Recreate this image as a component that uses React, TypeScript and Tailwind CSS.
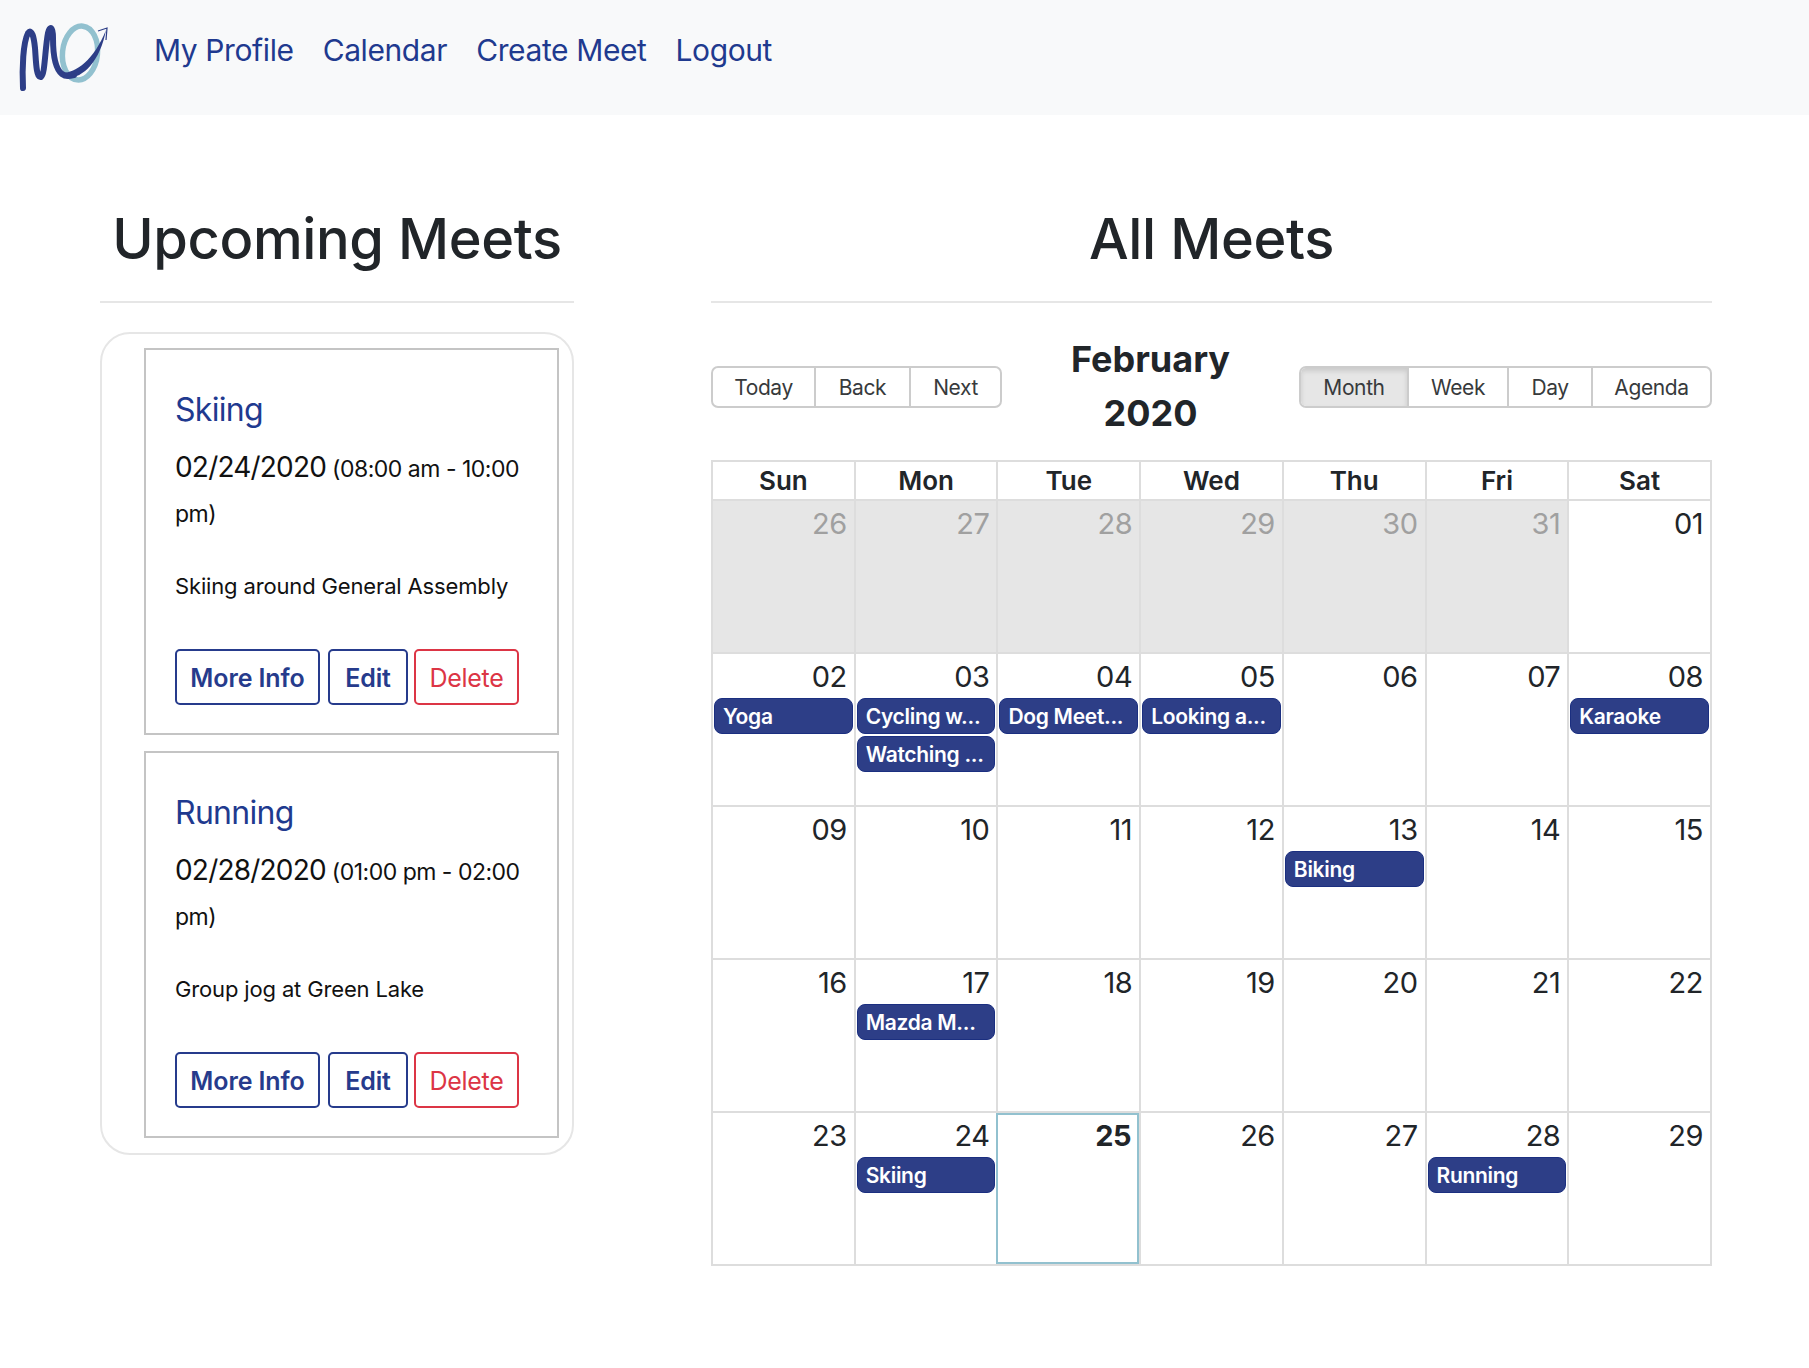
const NAV = ["My Profile", "Calendar", "Create Meet", "Logout"];

const MEETS = [
  {
    title: "Skiing",
    date: "02/24/2020",
    time: "(08:00 am - 10:00 pm)",
    body: "Skiing around General Assembly",
  },
  {
    title: "Running",
    date: "02/28/2020",
    time: "(01:00 pm - 02:00 pm)",
    body: "Group jog at Green Lake",
  },
];

const HEAD = ["Sun", "Mon", "Tue", "Wed", "Thu", "Fri", "Sat"];

type Day = { n: string; off?: boolean; today?: boolean; events?: string[] };

const WEEKS: Day[][] = [
  [
    { n: "26", off: true },
    { n: "27", off: true },
    { n: "28", off: true },
    { n: "29", off: true },
    { n: "30", off: true },
    { n: "31", off: true },
    { n: "01" },
  ],
  [
    { n: "02", events: ["Yoga"] },
    { n: "03", events: ["Cycling w...", "Watching ..."] },
    { n: "04", events: ["Dog Meet..."] },
    { n: "05", events: ["Looking a..."] },
    { n: "06" },
    { n: "07" },
    { n: "08", events: ["Karaoke"] },
  ],
  [
    { n: "09" },
    { n: "10" },
    { n: "11" },
    { n: "12" },
    { n: "13", events: ["Biking"] },
    { n: "14" },
    { n: "15" },
  ],
  [
    { n: "16" },
    { n: "17", events: ["Mazda M..."] },
    { n: "18" },
    { n: "19" },
    { n: "20" },
    { n: "21" },
    { n: "22" },
  ],
  [
    { n: "23" },
    { n: "24", events: ["Skiing"] },
    { n: "25", today: true },
    { n: "26" },
    { n: "27" },
    { n: "28", events: ["Running"] },
    { n: "29" },
  ],
];

function Logo() {
  return (
    <svg width="100" height="80" viewBox="0 0 100 80" className="shrink-0">
      <ellipse cx="64" cy="35" rx="17.5" ry="27" fill="none" stroke="#92c1cf" strokeWidth="5.5" transform="rotate(6 64 35)" />
      <path
        d="M7 70 C6 50 7 25 12 15 C16 10 18 20 19 30 C20 42 20 60 25 59 C29 57 29 30 32 15 C34 7 37 9 37 20 C37 32 38 50 46 56 C50 59 54 58 58 57"
        fill="none"
        stroke="#2d3e87"
        strokeWidth="6"
        strokeLinecap="round"
        strokeLinejoin="round"
      />
      <path d="M46 55 C60 55 78 42 90 12 C84 44 66 62 48 60 Z" fill="#2d3e87" />
      <path d="M82 13 L91 10 L90 22" fill="none" stroke="#2d3e87" strokeWidth="1.2" />
    </svg>
  );
}

function MeetCard({ title, date, time, body }: (typeof MEETS)[number]) {
  return (
    <div className="h-[387px] border-2 border-[#c4c4c4] px-[29px] pt-[41px]">
      <h3 className="text-[32px] leading-[38px] tracking-[-0.7px] text-[#1f3a8f]">{title}</h3>
      <p className="mt-[16px] text-[23px] leading-[45px] tracking-[-0.5px] text-[#111]">
        <span className="text-[28px] tracking-[-0.8px]">{date}</span> {time}
      </p>
      <p className="mt-[27px] text-[22px] leading-[44px] tracking-[-0.15px] text-[#111]">{body}</p>
      <div className="mt-[41px] flex">
        <button className="h-[56px] w-[145px] rounded-[5px] border-2 border-[#263b8c] pt-[3px] text-[25px] font-semibold tracking-[-0.1px] text-[#263b8c]">
          More Info
        </button>
        <button className="ml-[8px] h-[56px] w-[80px] rounded-[5px] border-2 border-[#263b8c] pt-[3px] text-[25px] font-semibold tracking-[-0.1px] text-[#263b8c]">
          Edit
        </button>
        <button className="ml-[6px] h-[56px] w-[105px] rounded-[5px] border-2 border-[#dc3545] pt-[3px] text-[25px] tracking-[-0.3px] text-[#dc3545]">
          Delete
        </button>
      </div>
    </div>
  );
}

function ToolbarButton({ label, width, active }: { label: string; width: string; active?: boolean }) {
  return (
    <button
      className={`h-full border-l-2 border-[#ccc] pt-[2px] text-[21px] tracking-[-0.4px] text-[#373a3c] first:border-l-0 ${width} ${
        active ? "bg-[#e6e6e6] shadow-[inset_0_3px_5px_rgba(0,0,0,0.125)]" : ""
      }`}
    >
      {label}
    </button>
  );
}

export default function App() {
  return (
    <div className="min-h-[1368px] bg-white font-['Inter',sans-serif] text-[#212529]">
      <nav className="flex h-[115px] items-center bg-[#f8f9fa] pl-[16px]">
        <Logo />
        <div className="ml-[38px] flex -translate-y-[7px] gap-[29px]">
          {NAV.map((item) => (
            <a key={item} className="text-[30px] tracking-[-0.4px] text-[#1f3a8f]">
              {item}
            </a>
          ))}
        </div>
      </nav>

      <main className="flex gap-[137px] pl-[100px] pr-[97px] pt-[81px]">
        <section className="w-[474px] shrink-0">
          <h2 className="border-b-2 border-[#e6e6e6] pb-[19px] text-center text-[56px] font-medium leading-[86px] tracking-[-0.4px]">
            Upcoming Meets
          </h2>
          <div className="mt-[29px] flex flex-col gap-[16px] rounded-[30px] border-2 border-[#e6e6e6] pb-[15px] pl-[42px] pr-[13px] pt-[14px]">
            {MEETS.map((meet) => (
              <MeetCard key={meet.title} {...meet} />
            ))}
          </div>
        </section>

        <section className="flex-1">
          <h2 className="border-b-2 border-[#e6e6e6] pb-[19px] text-center text-[56px] font-medium leading-[86px] tracking-[-0.4px]">
            All Meets
          </h2>

          <div className="mt-[30px] flex items-center justify-between">
            <div className="flex h-[42px] w-[291px] overflow-hidden rounded-[7px] border-2 border-[#ccc]">
              <ToolbarButton label="Today" width="w-[101px]" />
              <ToolbarButton label="Back" width="w-[95px]" />
              <ToolbarButton label="Next" width="flex-1" />
            </div>
            <h3 className="w-[250px] -translate-y-px text-center text-[36px] font-bold leading-[54px]">February 2020</h3>
            <div className="flex h-[42px] w-[413px] overflow-hidden rounded-[7px] border-2 border-[#ccc]">
              <ToolbarButton label="Month" width="w-[106px]" active />
              <ToolbarButton label="Week" width="w-[100px]" />
              <ToolbarButton label="Day" width="w-[84px]" />
              <ToolbarButton label="Agenda" width="flex-1" />
            </div>
          </div>

          <div className="mt-[19px] border-y-2 border-r-2 border-[#ddd]">
            <div className="grid h-[37px] grid-cols-7">
              {HEAD.map((day) => (
                <div
                  key={day}
                  className="border-l-2 border-[#ddd] text-center text-[26px] font-semibold leading-[37px]"
                >
                  {day}
                </div>
              ))}
            </div>
            {WEEKS.map((week) => (
              <div key={week[0].n} className="grid h-[153px] grid-cols-7 border-t-2 border-[#ddd]">
                {week.map((day) => (
                  <div
                    key={day.n + (day.off ? "off" : "")}
                    className={`border-l-2 ${
                      day.today ? "border-2 border-[#92c1cf]" : "border-[#ddd]"
                    } ${day.off ? "bg-[#e6e6e6]" : ""}`}
                  >
                    <div
                      className={`text-right text-[29px] leading-[40px] tracking-[-0.5px] ${
                        day.off ? "text-[#a0a0a0]" : "text-[#212529]"
                      } ${day.today ? "pr-[6px] pt-px font-bold" : "pr-[7px] pt-[3px]"}`}
                    >
                      {day.n}
                    </div>
                    <div className="mt-[1px] flex flex-col gap-[2px] px-[1px]">
                      {day.events?.map((event) => (
                        <div
                          key={event}
                          className="h-[36px] overflow-hidden whitespace-nowrap rounded-[8px] border border-[#1b2f80] bg-[#2d3e87] px-[8px] pt-[1px] text-[21px] font-semibold leading-[34px] tracking-[-0.3px] text-white"
                        >
                          {event}
                        </div>
                      ))}
                    </div>
                  </div>
                ))}
              </div>
            ))}
          </div>
        </section>
      </main>
    </div>
  );
}
